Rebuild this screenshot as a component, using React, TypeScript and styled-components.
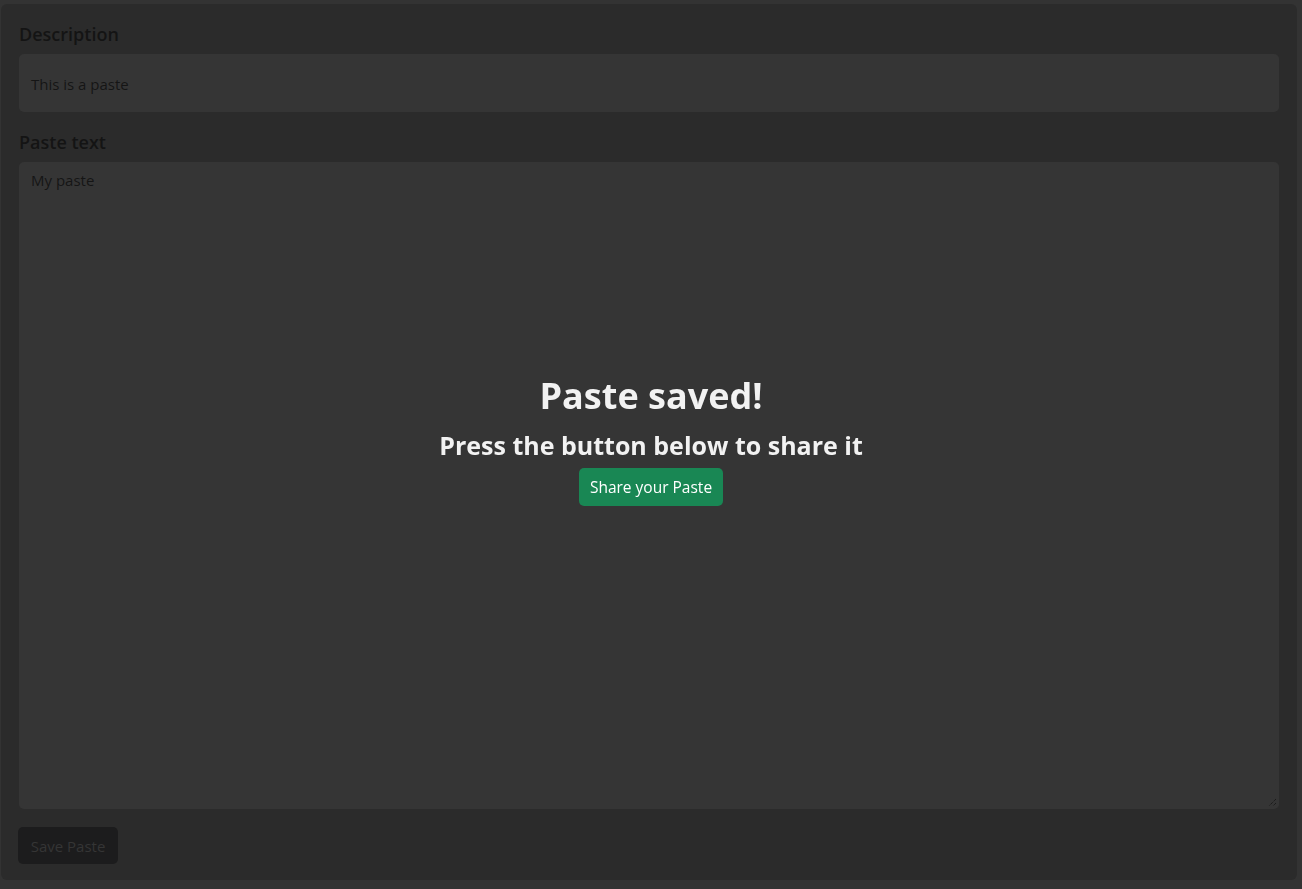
import React from "react";
import styled, { createGlobalStyle } from "styled-components";

const Global = createGlobalStyle`
  html, body { margin: 0; padding: 0; background: #333333; }
  body { font-family: "Open Sans", "Noto Sans", sans-serif; }
  * { box-sizing: border-box; }
`;

const Page = styled.div`
  padding: 4px 5px 9px 1px;
  height: 889px;
`;

const Card = styled.form`
  background: #2b2b2b;
  border-radius: 6px;
  height: 100%;
  padding: 17px 18px 16px 18px;
  display: flex;
  flex-direction: column;
`;

const Label = styled.label`
  display: block;
  font-size: 18px;
  font-weight: 600;
  color: #141414;
  line-height: 26px;
  margin-bottom: 7px;
`;

const Field = styled.div<{ $grow?: boolean }>`
  display: flex;
  flex-direction: column;
  margin-bottom: ${(p) => (p.$grow ? "18px" : "17px")};
  ${(p) => (p.$grow ? "flex: 1;" : "")}
`;

const Input = styled.div`
  background: #353535;
  border-radius: 5px;
  height: 58px;
  padding: 1px 12px 0;
  display: flex;
  align-items: center;
  font-size: 15px;
  color: #151515;
`;

const TextArea = styled.div`
  position: relative;
  flex: 1;
  background: #353535;
  border-radius: 5px;
  padding: 7px 12px;
  font-size: 15px;
  line-height: 22px;
  color: #151515;
`;

const Grip = styled.svg`
  position: absolute;
  right: 2px;
  bottom: 2px;
`;

const SaveButton = styled.button`
  align-self: flex-start;
  margin-left: -1px;
  width: 100px;
  height: 37px;
  border: none;
  border-radius: 5px;
  background: #1c1c1d;
  color: #353535;
  font-family: inherit;
  font-size: 15px;
  padding: 0;
`;

const Overlay = styled.div`
  position: fixed;
  inset: 0;
  display: flex;
  flex-direction: column;
  align-items: center;
  justify-content: center;
  color: #f2f2f2;
  padding-bottom: 10px;
`;

const Title = styled.h1`
  margin: 0 0 10px;
  font-size: 36px;
  font-weight: 700;
  line-height: 44px;
`;

const Subtitle = styled.h3`
  margin: 0 0 6px;
  font-size: 25px;
  font-weight: 700;
  line-height: 34px;
`;

const ShareButton = styled.button`
  height: 38px;
  width: 144px;
  border: none;
  border-radius: 5px;
  background: #198754;
  color: #ffffff;
  font-family: inherit;
  font-size: 15.5px;
  padding: 0;
`;

export default function App() {
  return (
    <>
      <Global />
      <Page>
        <Card>
          <Field>
            <Label>Description</Label>
            <Input>This is a paste</Input>
          </Field>
          <Field $grow>
            <Label>Paste text</Label>
            <TextArea>
              My paste
              <Grip width="10" height="10" viewBox="0 0 10 10">
                <path d="M9 2 L2 9 M9 6 L6 9" stroke="#111" strokeWidth="1" strokeDasharray="1 1" />
              </Grip>
            </TextArea>
          </Field>
          <SaveButton type="button">Save Paste</SaveButton>
        </Card>
      </Page>
      <Overlay>
        <Title>Paste saved!</Title>
        <Subtitle>Press the button below to share it</Subtitle>
        <ShareButton type="button">Share your Paste</ShareButton>
      </Overlay>
    </>
  );
}
